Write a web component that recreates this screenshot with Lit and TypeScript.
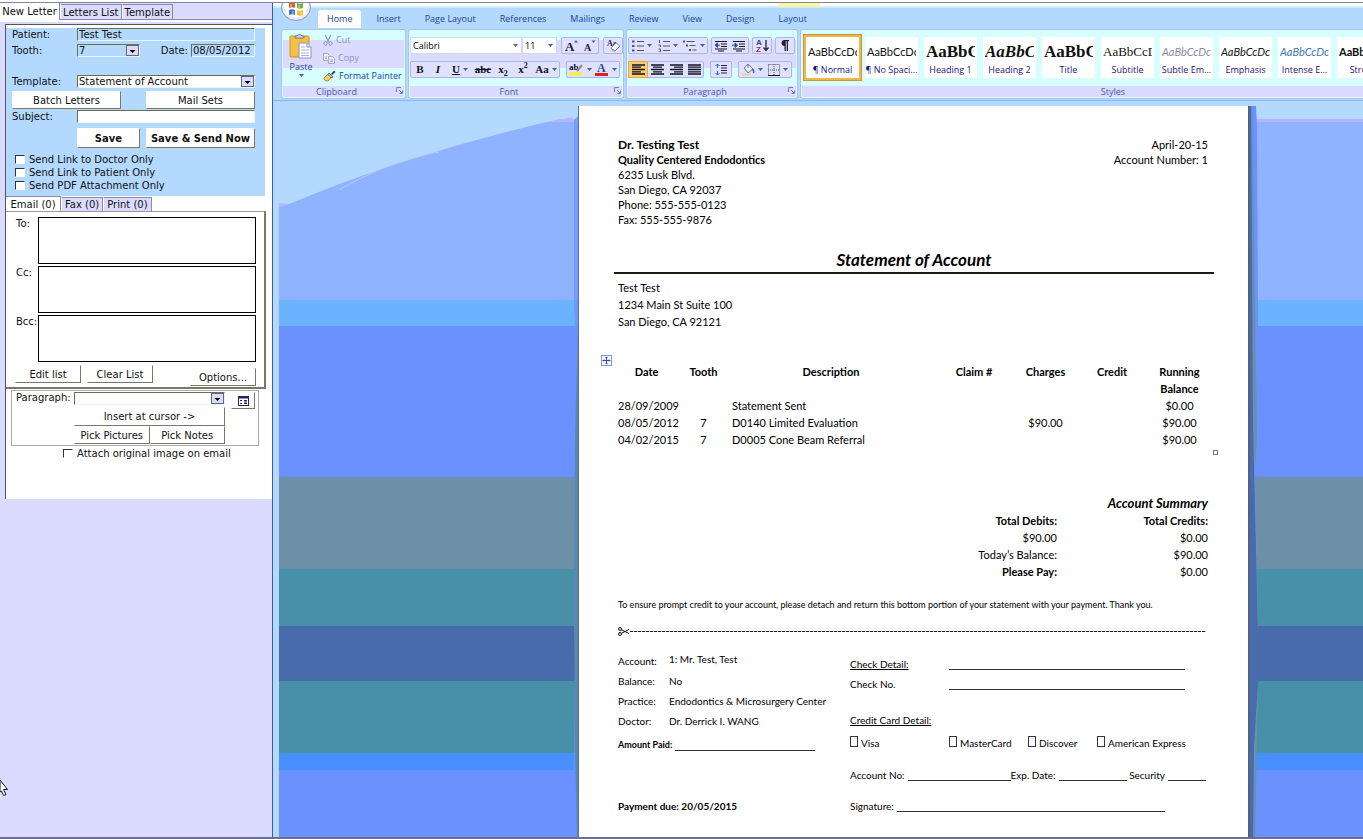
import { LitElement, html, css, svg, nothing } from "lit";
import { customElement } from "lit/decorators.js";
import { classMap } from "lit/directives/class-map.js";

const reset = css`
  *, *::before, *::after { box-sizing: border-box; }
  button, input, select, textarea { font: inherit; color: inherit; margin: 0; border-radius: 0; }
  button { cursor: pointer; padding: 0; }
`;

/* ---------- Letter form on the left ---------- */

@customElement("letter-panel")
class LetterPanel extends LitElement {
  static styles = [reset, css`
    :host { display: block; background: #dbdbff; font: 10px/14px "DejaVu Sans", Verdana, sans-serif; color: #111; }
    .tabs { display: flex; align-items: flex-end; height: 16px; }
    .tabs button { background: #dbdbff; border: 1px solid #8a8aa8; border-left-color: #fff; border-bottom: 0; height: 15px; line-height: 13px; padding: 0 2px; white-space: nowrap; }
    .tabs button.on { background: #fff; border: 0; height: 16px; line-height: 15px; width: 60px; padding: 0; border-right: 1px solid #8a8aa8; }
    .edge { height: 5px; border-top: 1px solid #8a8aa8; background: linear-gradient(#fff 0 2px, #dbdbff 2px); }
    .edge { border-image: linear-gradient(90deg, #fff 0 60px, #8a8aa8 60px) 1; }
    .sheet { margin-left: 5px; height: 475px; background: #fff; border-top: 1px solid #555; border-left: 1px solid #555; padding-top: 3px; }
    .blue { background: #b4d9ff; width: 259px; height: 168px; padding: 0 10px 0 6px; display: grid; grid-template-columns: 65px minmax(0, 1fr); grid-template-rows: 16px 31px 16px 19px 17px 22px; align-items: start; align-content: start; }
    .blue > label { line-height: 13px; }
    .field { height: 13px; width: 100%; border: 1px solid; border-color: #6d6d5a #e8f6ff #e8f6ff #6d6d5a; background: #fff; padding: 0 1px; line-height: 11px; display: block; outline: 0; }
    .tint { background: #b4d9ff; }
    .pick { position: relative; display: block; height: 13px; }
    .pick select { appearance: none; }
    .pick svg { position: absolute; right: 1px; top: 1px; width: 13px; height: 11px; pointer-events: none; }
    .split { display: flex; justify-content: space-between; }
    .date { display: flex; gap: 3px; line-height: 13px; }
    .wide { grid-column: 1 / -1; display: flex; justify-content: space-between; }
    .btn { background: #fff; border: 1px solid; border-color: #fff #77776a #77776a #fff; height: 18px; line-height: 15px; width: 109px; white-space: nowrap; }
    .w63 { width: 63px; }
    .w64 { width: 64px; }
    .half { width: 66px; }
    .save { font-weight: bold; height: 20px; line-height: 17px; }
    .saves { display: flex; justify-content: space-between; padding-top: 1px; }
    .checks { grid-column: 1 / -1; padding: 4px 0 0 3px; display: grid; row-gap: 0; }
    .check { display: flex; align-items: center; gap: 4px; line-height: 13px; height: 13px; }
    .check input { appearance: none; width: 10px; height: 9px; background: #fff; border: 1px solid; border-color: #333 #fff #fff #333; }
    .mail { width: 260px; height: 178px; border-top: 1px solid #9a9a9a; border-right: 2px solid #77776a; border-bottom: 2px solid #77776a; padding: 5px 8px 0 8px; }
    .tabs.sub { height: 15px; }
    .tabs.sub button { height: 14px; padding: 0 3px; }
    .tabs.sub button.on { width: 55px; height: 15px; padding: 0; border-top: 1px solid #8a8aa8; }
    .addr { display: grid; grid-template-columns: 24px 1fr; margin-bottom: 2px; line-height: 13px; }
    .addr label { padding-left: 2px; white-space: nowrap; }
    .addr textarea { height: 47px; width: 100%; resize: none; border: 1px solid #000; background: #fff; display: block; outline: 0; }
    .acts { display: flex; gap: 6px; padding: 1px 0 0 1px; }
    .acts .btn:last-child { margin: 3px 0 0 auto; }
    .para { width: 248px; height: 56px; margin: 1px 0 0 5px; border: 1px solid #aaa; display: grid; grid-template-columns: 58px 157px 24px; padding: 1px 2px 0 4px; align-content: start; }
    .para > label { line-height: 12px; }
    .stack { display: grid; grid-template-columns: 1fr 1fr; padding-right: 6px; }
    .stack .pick, .stack .long { grid-column: 1 / -1; }
    .stack .pick { height: 15px; }
    .stack .btn { width: auto; }
    .stack .long { height: 19px; }
    .icon { width: 24px; height: 17px; display: grid; place-items: center; }
    .attach { padding: 1px 0 0 57px; }
  `];

  arrow() {
    return html`<svg viewBox="0 0 13 11" aria-hidden="true"><rect x=".5" y=".5" width="12" height="10" fill="#dbdbff" stroke="#66667a"/><path d="M3.500 5h6L6.500 8z" fill="#000"/></svg>`;
  }
  check(id: string, text: string) {
    return html`<label class="check" for=${id}><input type="checkbox" id=${id}>${text}</label>`;
  }
  render() {
    return html`
      <nav class="tabs"><button class="on">New Letter</button><button>Letters List</button><button>Template</button></nav>
      <div class="edge"></div>
      <div class="sheet">
        <form class="blue" @submit=${(e: Event) => e.preventDefault()}>
          <label for="patient">Patient:</label><input class="field tint" id="patient" value="Test Test">
          <label for="tooth">Tooth:</label>
          <div class="split">
            <span class="pick w63"><select class="field tint" id="tooth"><option>7</option></select>${this.arrow()}</span>
            <span class="date"><label for="date">Date:</label><span class="w64"><input class="field tint" id="date" value="08/05/2012"></span></span>
          </div>
          <label for="template">Template:</label>
          <span class="pick"><select class="field" id="template"><option>Statement of Account</option></select>${this.arrow()}</span>
          <div class="wide"><button class="btn" type="button">Batch Letters</button><button class="btn" type="button">Mail Sets</button></div>
          <label for="subject">Subject:</label><input class="field" id="subject">
          <span></span>
          <div class="saves"><button class="btn save w63">Save</button><button class="btn save">Save &amp; Send Now</button></div>
          <div class="checks">
            ${this.check("doc", "Send Link to Doctor Only")}
            ${this.check("pat", "Send Link to Patient Only")}
            ${this.check("pdf", "Send PDF Attachment Only")}
          </div>
        </form>
        <nav class="tabs sub"><button class="on">Email (0)</button><button>Fax (0)</button><button>Print (0)</button></nav>
        <section class="mail">
          ${["To:", "Cc:", "Bcc:"].map(t => html`<div class="addr"><label for=${"a" + t}>${t}</label><textarea id=${"a" + t}></textarea></div>`)}
          <div class="acts"><button class="btn half">Edit list</button><button class="btn half">Clear List</button><button class="btn half">Options...</button></div>
        </section>
        <section class="para">
          <label for="paragraph">Paragraph:</label>
          <div class="stack">
            <span class="pick"><select class="field" id="paragraph"><option></option></select>${this.arrow()}</span>
            <button class="btn long">Insert at cursor -&gt;</button>
            <button class="btn">Pick Pictures</button><button class="btn">Pick Notes</button>
          </div>
          <button class="btn icon" aria-label="Paragraph list">
            <svg width="11" height="10" viewBox="0 0 11 10"><rect x=".5" y=".5" width="10" height="9" fill="#fff" stroke="#226"/><path d="M1 1.500h9" stroke="#226" stroke-width="2"/><path d="M2 4.500h2M2 7.500h2M6 4.500h3M6 6h3M6 7.500h3" stroke="#226"/></svg>
          </button>
        </section>
        <div class="attach">${this.check("attach", "Attach original image on email")}</div>
      </div>`;
  }
}

/* ---------- Ribbon ---------- */

const g = (w: number, h: number, body: unknown) =>
  html`<svg width=${w} height=${h} viewBox="0 0 ${w} ${h}" aria-hidden="true">${body}</svg>`;

const icons = {
  orb: g(32, 18, svg`<ellipse cx="16" cy="4" rx="14.500" ry="13.500" fill="#e9eef8" stroke="#8b9cc4"/><ellipse cx="16" cy="3" rx="12" ry="11" fill="#fff"/>
    <path d="M9 0c2-1 4-1 6 0v5c-2-1-4-1-6 0z" fill="#e0622a"/><path d="M17 0c2 1 4 1 6 0v5c-2 1-4 1-6 0z" fill="#7cae3c"/>
    <path d="M9 7c2-1 4-1 6 0v5c-2-1-4-1-6 0z" fill="#3f74c9"/><path d="M17 7c2 1 4 1 6 0v5c-2 1-4 1-6 0z" fill="#f2c232"/>
    <path d="M11 1v3M13 8v3M19 2v3M21 9v3" stroke="#fff" stroke-opacity=".6"/>`),
  paste: g(24, 26, svg`<rect x="1" y="3" width="19" height="21" rx="1" fill="#f5c043" stroke="#c9912b"/><path d="M6 5V3h2a3 3 0 0 1 5 0h2v2z" fill="#d8d8e4" stroke="#77778c"/>
    <path d="M10 10h8l4 4v11H10z" fill="#fff" stroke="#8794c4"/><path d="M18 10v4h4" fill="#dfe6fa" stroke="#8794c4"/><path d="M12 14h4M12 17h8M12 20h8M12 22.500h8" stroke="#a5b2dc"/>`),
  cut: g(10, 12, svg`<path d="M2 1l4 7M8 1L4 8" stroke="#8e9ab4" stroke-width="1.300"/><circle cx="2.500" cy="9.500" r="1.700" fill="none" stroke="#8e9ab4"/><circle cx="7.500" cy="9.500" r="1.700" fill="none" stroke="#8e9ab4"/>`),
  copy: g(12, 11, svg`<path d="M.5.5h4l2 2v5h-6z" fill="#eef" stroke="#a4a8c8"/><path d="M5.500 3.500h4l2 2v5h-6z" fill="#eef" stroke="#a4a8c8"/><path d="M7 7h3M7 8.500h3M2 4h2M2 5.500h2" stroke="#a4a8c8"/>`),
  brush: g(13, 12, svg`<path d="M8 4l3-3.500 1.500 1.500L9.500 5z" fill="#1f4a8a"/><path d="M6 3l4 4-2 1-3-3z" fill="#ccd" stroke="#556"/><path d="M5 4L1 8c0 2 1 3 4 3l3-3z" fill="#f4cf6a" stroke="#a9873a"/>`),
  launch: g(7, 7, svg`<path d="M.5 5V.5H5" fill="none" stroke="#7080b8"/><path d="M3 3l3 3M6.500 3.500v3h-3" fill="none" stroke="#7080b8"/>`),
  down: g(5, 3, svg`<path d="M0 0h5L2.500 3z" fill="#4a5f9e"/>`),
  grow: g(13, 13, svg`<text x="0" y="12" font-size="13" font-weight="bold" font-family="Liberation Serif" fill="#223">A</text><path d="M9 3.500h4L11 1z" fill="#2f64c8"/>`),
  shrink: g(13, 13, svg`<text x="1" y="12" font-size="10" font-weight="bold" font-family="Liberation Serif" fill="#223">A</text><path d="M8.500 1.500h4L10.500 4z" fill="#2f64c8"/>`),
  eraser: g(15, 13, svg`<text x="1" y="7" font-size="8" font-weight="bold" font-family="Liberation Serif" fill="#223">Aa</text><path d="M5 9l5-5 4 3-5 5H7z" fill="#fff" stroke="#8a8ab4"/><path d="M5 9l4 3" stroke="#8a8ab4"/>`),
  bullets: g(12, 12, svg`<path d="M0 1.500h2.500M0 6h2.500M0 10.500h2.500" stroke="#3a55a8" stroke-width="2"/><path d="M5 1.500h7M5 6h7M5 10.500h7" stroke="#556"/>`),
  numbers: g(12, 12, svg`<path d="M1.500 0v3M.5 5h2v2M.5 9h2v3h-2" fill="none" stroke="#3a55a8"/><path d="M5 1.500h7M5 6h7M5 10.500h7" stroke="#556"/>`),
  levels: g(14, 12, svg`<path d="M0 1.500h2M3 5.500h2M6 10h2" stroke="#3a55a8" stroke-width="2"/><path d="M3.500 1.500h8M6.500 5.500h6M9.500 10h4" stroke="#556"/>`),
  outdent: g(14, 12, svg`<path d="M1 1.500h12M7 4h6M7 6.500h6M1 9h12M4 11h6" stroke="#112" stroke-width="1.200"/><path d="M6 5.200L2 5.200M3.500 3L1 5.200l2.500 2.300z" fill="#2849a0" stroke="#2849a0"/>`),
  indent: g(14, 12, svg`<path d="M1 1.500h12M7 4h6M7 6.500h6M1 9h12M4 11h6" stroke="#112" stroke-width="1.200"/><path d="M0 5.200h4M3 3l2.500 2.200L3 7.500z" fill="#2849a0" stroke="#2849a0"/>`),
  sort: g(13, 13, svg`<text x="0" y="6" font-size="8" font-weight="bold" font-family="Liberation Sans" fill="#2849a0">A</text><text x="0" y="13" font-size="8" font-weight="bold" font-family="Liberation Sans" fill="#a02c3c">Z</text><path d="M10 1v10M7.500 8.500l2.500 3 2.500-3" fill="none" stroke="#223" stroke-width="1.300"/>`),
  pilcrow: g(10, 11, svg`<path d="M4.500 0H9v1.300H8V11H6.700V1.300H5.800V11H4.500V6A3 3 0 0 1 4.500 0z" fill="#223"/>`),
  left: g(13, 11, svg`<path d="M0 1h13M0 3.200h9M0 5.500h13M0 7.800h9M0 10h13" stroke="#112" stroke-width="1.300"/>`),
  center: g(13, 11, svg`<path d="M0 1h13M2 3.200h9M0 5.500h13M2 7.800h9M0 10h13" stroke="#112" stroke-width="1.300"/>`),
  right: g(13, 11, svg`<path d="M0 1h13M4 3.200h9M0 5.500h13M4 7.800h9M0 10h13" stroke="#112" stroke-width="1.300"/>`),
  justify: g(13, 11, svg`<path d="M0 1h13M0 3.200h13M0 5.500h13M0 7.800h13M0 10h13" stroke="#112" stroke-width="1.300"/>`),
  spacing: g(12, 13, svg`<path d="M2.500 1v4M2.500 8v4M.5 3l2-2 2 2M.5 10l2 2 2-2" fill="none" stroke="#2f64c8"/><path d="M6 2.500h6M6 5h6M6 7.500h6M6 10h6" stroke="#223"/>`),
  bucket: g(14, 13, svg`<path d="M3 5l4-4 5 5-5 4z" fill="#e8edfa" stroke="#6a76a8"/><path d="M7 1v4" stroke="#6a76a8"/><path d="M11 6c2 1 2 3 1.500 4" fill="none" stroke="#2f64c8" stroke-width="1.500"/><path d="M1 11.500h9" stroke="#e8d98a" stroke-width="2"/>`),
  borders: g(12, 12, svg`<path d="M.5.5h11v11M.5.5v11M6 0v12M0 6h12" fill="none" stroke="#556" stroke-dasharray="1 1"/><path d="M0 11.500h12" stroke="#112"/>`),
  high: g(15, 13, svg`<text x="0" y="7" font-size="9" font-weight="bold" font-family="Liberation Serif" fill="#112">ab</text><path d="M8 8l5-6" stroke="#889" stroke-width="2"/><path d="M0 11h13" stroke="#ffee22" stroke-width="3"/>`),
  color: g(14, 13, svg`<text x="2" y="9" font-size="12" font-weight="bold" font-family="Liberation Serif" fill="#2a4a9c">A</text><path d="M0 11.500h13" stroke="#e0201c" stroke-width="3"/>`),
};

type Tool = { label: string; icon?: unknown; text?: unknown; cls?: string; menu?: boolean };

@customElement("word-ribbon")
class WordRibbon extends LitElement {
  static styles = [reset, css`
    :host { display: block; background: #b4d9ff; font: 9px/14px "Open Sans", "Noto Sans", sans-serif; color: #1d3f94; overflow: hidden; }
    .title { height: 5px; background: linear-gradient(#fff 0 3px, #c8efff 3px 5px); padding-left: 505px; }
    .context { width: 42px; height: 4px; background: #fcf6a4; }
    .menu { display: flex; align-items: flex-end; gap: 6px; height: 20px; padding-left: 7px; }
    .orb { width: 32px; height: 18px; align-self: flex-start; margin-top: -5px; border: 0; background: none; }
    .orb svg { display: block; }
    .tab { border: 0; background: none; padding: 0 9px; height: 18px; line-height: 16px; white-space: nowrap; }
    .tab.on { background: #fff; border-radius: 3px 3px 0 0; }
    .groups { display: flex; gap: 2px; height: 73px; padding: 1px 0 1px 8px; border-bottom: 1px solid #8fb4f0; }
    .group { display: flex; flex-direction: column; border: 1px solid #a4c4f4; border-radius: 3px; background: linear-gradient(#d8ffff 0 10px, #dbdbff 10px 38px, #d8ffff 38px 56px, #dbdbff 56px); box-shadow: inset 0 0 0 1px #e8fbff; flex: none; }
    .group .body { flex: 1; }
    .cap { display: grid; grid-template-columns: 12px 1fr 12px; height: 13px; line-height: 14px; text-align: center; color: #3c5cb0; }
    .cap button { grid-column: 3; border: 0; background: none; line-height: 0; height: 11px; }
    .cap span { grid-column: 2; padding-right: 14px; }
    .clip { width: 125px; }
    .font { width: 216px; }
    .parg { width: 172px; }
    .styles { flex: 1 0 640px; background: linear-gradient(#d8ffff 0 56px, #dbdbff 56px); margin-right: -77px; }
    .clip .body { display: grid; grid-template-columns: 38px 1fr; }
    .paste { border: 0; background: none; color: inherit; display: flex; flex-direction: column; align-items: center; padding-top: 3px; }
    .paste .lbl { line-height: 15px; }
    .cmds { display: grid; grid-template-rows: repeat(3, 18px); padding-top: 1px; }
    .cmd { border: 0; background: none; display: flex; align-items: center; gap: 3px; padding-left: 3px; white-space: nowrap; }
    .cmd.off { color: #8e94b8; }
    .cmd svg { flex: none; }
    .rows { display: grid; grid-template-rows: 17px 17px; row-gap: 7px; padding: 7px 1px 0; align-content: start; }
    .row { display: flex; gap: 4px; }
    .tight { gap: 3px; }
    .spread { gap: 6px; }
    .combo { position: relative; display: block; }
    .combo select { appearance: none; height: 17px; width: 100%; border: 1px solid #c8dcff; background: #fff; color: #000; padding: 0 2px; display: block; outline: 0; }
    .combo svg { position: absolute; right: 4px; top: 7px; pointer-events: none; }
    .face { width: 112px; }
    .pt { width: 35px; margin-left: -4px; }
    .cluster { display: flex; border: 1px solid #a8b8ee; border-radius: 2px; background: #e0e0ff; height: 17px; }
    .tool { border: 0; background: none; color: #111; display: flex; align-items: center; justify-content: center; gap: 3px; width: 18px; font: bold 11px/13px "Liberation Serif", serif; white-space: nowrap; }
    .tool.menu { width: 26px; height: auto; padding: 0; }
    .tool.roomy { width: 20px; }
    .tool.on { background: #ffce6b; box-shadow: 0 0 0 1px #e0a850; }
    .it { font-style: italic; }
    .un { text-decoration: underline; }
    .st { text-decoration: line-through; }
    .sm { font-size: 8px; line-height: 0; }
    .gallery { display: flex; gap: 6px; padding: 7px 0 0 5px; }
    .style { width: 53px; height: 41px; border: 0; background: #fff; display: flex; flex-direction: column; align-items: center; overflow: hidden; flex: none; padding: 0; color: #1c1480; }
    .style.on { box-shadow: 0 0 0 2px #f0b848, 0 0 0 3px #c89440; }
    .prev { width: 49px; height: 25px; line-height: 29px; overflow: hidden; white-space: nowrap; color: #111; font-family: Lato, sans-serif; font-size: 11px; text-align: left; }
    .prev.serif { font: bold 17px/29px "Liberation Serif", serif; }
    .prev.sub { font: 13px/29px "Liberation Serif", serif; }
    .prev.i { font-style: italic; }
    .prev.grey { color: #8c8ca0; }
    .prev.blue { color: #3c78b4; }
    .prev.b { font-weight: bold; }
    .nm { line-height: 16px; white-space: nowrap; }
  `];

  tool(t: Tool) {
    return html`<button class="tool ${t.cls ?? ""} ${t.menu ? "menu" : ""}" aria-label=${t.label}>${t.icon ?? html`<span>${t.text}</span>`}${t.menu ? icons.down : nothing}</button>`;
  }
  cluster(...tools: Tool[]) {
    return html`<div class="cluster">${tools.map(t => this.tool(t))}</div>`;
  }
  cap(name: string, launch = true) {
    return html`<div class="cap"><span>${name}</span>${launch ? html`<button aria-label="${name} options">${icons.launch}</button>` : nothing}</div>`;
  }
  render() {
    const tabs = ["Home", "Insert", "Page Layout", "References", "Mailings", "Review", "View", "Design", "Layout"];
    const styles: [string, string, string][] = [
      ["AaBbCcDc", "¶ Normal", ""], ["AaBbCcDc", "¶ No Spaci...", ""], ["AaBbC", "Heading 1", "serif"], ["AaBbCc", "Heading 2", "serif i"],
      ["AaBbC", "Title", "serif"], ["AaBbCcD", "Subtitle", "sub"], ["AaBbCcDc", "Subtle Em...", "i grey"], ["AaBbCcDc", "Emphasis", "i"],
      ["AaBbCcDc", "Intense E...", "i blue"], ["AaBbCcDc", "Strong", "b"],
    ];
    return html`
      <div class="title"><div class="context"></div></div>
      <nav class="menu">
        <button class="orb" aria-label="Office menu">${icons.orb}</button>
        ${tabs.map((t, i) => html`<button class=${classMap({ tab: true, on: i === 0 })}>${t}</button>`)}
      </nav>
      <div class="groups">
        <section class="group clip">
          <div class="body">
            <button class="paste">${icons.paste}<span class="lbl">Paste</span>${icons.down}</button>
            <div class="cmds"><button class="cmd off">${icons.cut}Cut</button><button class="cmd off">${icons.copy}Copy</button><button class="cmd">${icons.brush}Format Painter</button></div>
          </div>
          ${this.cap("Clipboard")}
        </section>
        <section class="group font">
          <div class="body rows">
            <div class="row">
              <span class="combo face"><select aria-label="Font"><option>Calibri</option></select>${icons.down}</span>
              <span class="combo pt"><select aria-label="Font size"><option>11</option></select>${icons.down}</span>
              ${this.cluster({ label: "Grow font", icon: icons.grow }, { label: "Shrink font", icon: icons.shrink })}
              ${this.cluster({ label: "Clear formatting", icon: icons.eraser })}
            </div>
            <div class="row spread">
              ${this.cluster({ label: "Bold", text: "B" }, { label: "Italic", text: "I", cls: "it" }, { label: "Underline", text: html`<span class="un">U</span>`, menu: true },
                { label: "Strikethrough", text: html`<span class="st">abc</span>`, cls: "roomy" }, { label: "Subscript", text: html`x<sub class="sm">2</sub>`, cls: "roomy" },
                { label: "Superscript", text: html`x<sup class="sm">2</sup>`, cls: "roomy" }, { label: "Change case", text: "Aa", menu: true })}
              ${this.cluster({ label: "Highlight", icon: icons.high, menu: true }, { label: "Font colour", icon: icons.color, menu: true })}
            </div>
          </div>
          ${this.cap("Font")}
        </section>
        <section class="group parg">
          <div class="body rows">
            <div class="row tight">
              ${this.cluster({ label: "Bullets", icon: icons.bullets, menu: true }, { label: "Numbering", icon: icons.numbers, menu: true }, { label: "Multilevel list", icon: icons.levels, menu: true })}
              ${this.cluster({ label: "Decrease indent", icon: icons.outdent }, { label: "Increase indent", icon: icons.indent })}
              ${this.cluster({ label: "Sort", icon: icons.sort })}
              ${this.cluster({ label: "Show marks", icon: icons.pilcrow })}
            </div>
            <div class="row spread">
              ${this.cluster({ label: "Left", icon: icons.left, cls: "on" }, { label: "Center", icon: icons.center, cls: "roomy" }, { label: "Right", icon: icons.right }, { label: "Justify", icon: icons.justify })}
              ${this.cluster({ label: "Line spacing", icon: icons.spacing, cls: "roomy" })}
              ${this.cluster({ label: "Shading", icon: icons.bucket, menu: true }, { label: "Borders", icon: icons.borders, menu: true })}
            </div>
          </div>
          ${this.cap("Paragraph")}
        </section>
        <section class="group styles">
          <div class="body gallery">
            ${styles.map(([p, n, c], i) => html`<button class=${classMap({ style: true, on: i === 0 })}><span class="prev ${c}">${p}</span><span class="nm">${n}</span></button>`)}
          </div>
          ${this.cap("Styles", false)}
        </section>
      </div>`;
  }
}

/* ---------- Statement document ---------- */

@customElement("statement-page")
class StatementPage extends LitElement {
  static styles = [reset, css`
    :host { display: flex; background: linear-gradient(#b4d9ff 0 18px, #b4b4ff 18px 21px, #90b3ff 21px 199px, #6bb3ff 199px 225px, #6b90ff 225px 376px, #6b90a8 376px 468px, #4890a8 468px 525px, #486bab 525px 580px, #4890a8 580px 652px, #4890ff 652px 669px, #6b90ff 669px); font: 11px/17px Lato, Carlito, sans-serif; color: #000; }
    .gutter { width: 293px; flex: none; }
    .gutter svg, .shade { display: block; }
    .shade { flex: none; height: auto; margin-top: 5px; }
    .page { position: relative; width: 670px; flex: none; background: #fff; margin-top: 5px; padding: 31px 40px 20px 39px; border-left: 1px solid #62707c; }
    .head { display: flex; justify-content: space-between; line-height: 15px; }
    .lead { font-size: 12px; }
    .end { text-align: right; }
    h1 { font: italic bold 17px/24px Lato, Carlito, sans-serif; text-align: center; margin: 21px -6px 5px -4px; border-bottom: 2px solid #1c1c10; }
    table { width: 100%; border-collapse: collapse; table-layout: fixed; margin-top: 33px; text-align: center; }
    th, td { padding: 0; vertical-align: top; height: 17px; }
    .c1 { width: 57px; } .c2 { width: 57px; } .c3 { width: 198px; } .c4 { width: 88px; } .c5 { width: 55px; } .c6 { width: 78px; }
    .l { text-align: left; white-space: nowrap; }
    .handle { position: absolute; left: 22px; top: 249px; }
    .grip { position: absolute; right: 30px; top: 344px; width: 5px; height: 5px; border: 1px solid #777; }
    .sum { margin-top: 47px; }
    .sum th, .sum td { text-align: right; font-weight: normal; }
    .sum .s1 { width: 439px; }
    .sum .b { font-weight: bold; }
    .sum .bi { font-weight: bold; font-style: italic; font-size: 13px; line-height: 17px; }
    .note { margin: 18px 0 13px; font-size: 9px; line-height: 14px; white-space: nowrap; }
    .cutline { display: flex; align-items: center; height: 12px; }
    .cutline i { flex: 1; height: 1px; background: repeating-linear-gradient(90deg, #222 0 3px, #ccc 3px 4px); margin-right: 2px; }
    .slip { display: grid; grid-template-columns: 232px 1fr; margin-top: 14px; font-size: 10px; line-height: 20px; white-space: nowrap; }
    dl { display: grid; grid-template-columns: 51px 1fr; margin: 0; }
    dd { margin: 0; }
    .up { line-height: 16px; }
    .line { display: flex; align-items: flex-start; height: 20px; }
    .blank { border: 0; border-bottom: 1px solid #333; background: none; height: 16px; padding: 0; min-width: 0; outline: 0; margin-left: 3px; }
    .w140 { width: 140px; } .w236 { width: 236px; } .w103 { width: 103px; } .w68 { width: 68px; } .w38 { width: 38px; } .w268 { width: 268px; }
    .paid { margin-top: 4px; font-weight: bold; font-size: 9px; }
    .due { margin-top: 41px; font-weight: bold; }
    .right { padding-top: 3px; }
    .key { width: 96px; }
    .u { text-decoration: underline; }
    .card { margin-top: 16px; }
    .opts { margin-top: 3px; display: grid; grid-template-columns: 99px 79px 69px 1fr; }
    .opts label { display: flex; gap: 3px; }
    .opts input { appearance: none; width: 8px; height: 11px; border: 1px solid #335; margin-top: 3px; }
    .acct { margin-top: 12px; }
    .sig { margin-top: 11px; }
  `];

  blank(label: string, cls: string) {
    return html`<input class="blank ${cls}" aria-label=${label}>`;
  }
  render() {
    const rows = [
      ["28/09/2009", "", "Statement Sent", "", "", "", "$0.00"],
      ["08/05/2012", "7", "D0140 Limited Evaluation", "", "$90.00", "", "$90.00"],
      ["04/02/2015", "7", "D0005 Cone Beam Referral", "", "", "", "$90.00"],
    ];
    return html`
      <div class="gutter">
        <svg width="293" height="110" viewBox="0 0 293 110"><path d="M0 0H293V15C200 36 100 65 10 103L0 105z" fill="#b4d9ff"/><path d="M250 26L293 16V21H270zM0 102L10 103 0 106z" fill="#b4b4ff"/><path d="M60 89C100 66 130 57 160 51" fill="none" stroke="#b8c8ff"/></svg>
      </div>
      <svg class="shade" width="6" viewBox="0 0 6 731" preserveAspectRatio="none"><path d="M2 14L6 10V731H4L2 650 5 400 3 220 2 200z" fill="#6b90ff" fill-opacity=".7"/><path d="M6 230V731H5L3 640 2 510 3 330 5 260z" fill="#5a88b0"/></svg>
      <main class="page">
        <div class="head">
          <div><b class="lead">Dr. Testing Test</b><br><b>Quality Centered Endodontics</b><br>6235 Lusk Blvd.<br>San Diego, CA 92037<br>Phone: 555-555-0123<br>Fax: 555-555-9876</div>
          <div class="end">April-20-15<br>Account Number: 1</div>
        </div>
        <h1>Statement of Account</h1>
        <div>Test Test<br>1234 Main St Suite 100<br>San Diego, CA 92121</div>
        <svg class="handle" width="11" height="11" viewBox="0 0 11 11"><rect x=".5" y=".5" width="10" height="10" fill="#fff" stroke="#7c94d8"/><path d="M5.500 2v7M2 5.500h7M4.500 3l1-1 1 1M4.500 8l1 1 1-1M3 4.500l-1 1 1 1M8 4.500l1 1-1 1" fill="none" stroke="#2a4cb0"/></svg>
        <table>
          <colgroup><col class="c1"><col class="c2"><col class="c3"><col class="c4"><col class="c5"><col class="c6"><col></colgroup>
          <thead><tr><th>Date</th><th>Tooth</th><th>Description</th><th>Claim #</th><th>Charges</th><th>Credit</th><th>Running Balance</th></tr></thead>
          <tbody>${rows.map(r => html`<tr>${r.map((c, i) => html`<td class=${i === 2 ? "l" : ""}>${c}</td>`)}</tr>`)}</tbody>
        </table>
        <span class="grip"></span>
        <table class="sum">
          <colgroup><col class="s1"><col></colgroup>
          <tbody>
            <tr><td></td><th class="bi">Account Summary</th></tr>
            <tr><th class="b">Total Debits:</th><th class="b">Total Credits:</th></tr>
            <tr><td>$90.00</td><td>$0.00</td></tr>
            <tr><th>Today’s Balance:</th><td>$90.00</td></tr>
            <tr><th class="b">Please Pay:</th><td>$0.00</td></tr>
          </tbody>
        </table>
        <p class="note">To ensure prompt credit to your account, please detach and return this bottom portion of your statement with your payment. Thank you.</p>
        <div class="cutline"><svg width="12" height="9" viewBox="0 0 12 9"><path d="M3 2.500l8 4M3 6.500l8-4" stroke="#111"/><circle cx="2" cy="2" r="1.500" fill="none" stroke="#111"/><circle cx="2" cy="7" r="1.500" fill="none" stroke="#111"/></svg><i></i></div>
        <div class="slip">
          <div>
            <dl><dt>Account:</dt><dd class="up">1: Mr. Test, Test</dd><dt>Balance:</dt><dd>No</dd><dt>Practice:</dt><dd>Endodontics &amp; Microsurgery Center</dd><dt>Doctor:</dt><dd>Dr. Derrick I. WANG</dd></dl>
            <div class="line paid">Amount Paid: ${this.blank("Amount Paid", "w140")}</div>
            <div class="due">Payment due: 20/05/2015</div>
          </div>
          <div class="right">
            <div class="line"><span class="key u">Check Detail:</span>${this.blank("Check Detail", "w236")}</div>
            <div class="line"><span class="key">Check No.</span>${this.blank("Check No.", "w236")}</div>
            <div class="card u">Credit Card Detail:</div>
            <div class="opts">${["Visa", "MasterCard", "Discover", "American Express"].map(c => html`<label><input type="checkbox">${c}</label>`)}</div>
            <div class="line acct">Account No: ${this.blank("Account No", "w103")}Exp. Date: ${this.blank("Exp. Date", "w68")}&nbsp;Security ${this.blank("Security", "w38")}</div>
            <div class="line sig">Signature: ${this.blank("Signature", "w268")}</div>
          </div>
        </div>
      </main>
      <svg class="shade" width="10" viewBox="0 0 10 731" preserveAspectRatio="none"><path d="M0 0H8L9 20 10 220 7 375 10 520V576L7 640V731H0z" fill="#6b90ff"/><path d="M0 0H4L9 330 6 375 10 520V576L7 731H0z" fill="#6b90a8"/><path d="M0 0H3L5 320 7 400 10 530V576L6 640 5 731H0z" fill="#486bab"/><path d="M0 0H1.500V731H0z" fill="#52607c"/></svg>`;
  }
}

@customElement("app-root")
class AppRoot extends LitElement {
  static styles = [reset, css`
    :host { display: flex; flex-direction: column; min-height: 100vh; background: #dbdbff; overflow: hidden; position: relative; }
    .top { height: 3px; background: #fff; border-bottom: 1px solid #85859a; }
    .cols { flex: 1; display: grid; grid-template-columns: 272px minmax(0, 1fr); }
    .word { border-left: 1px solid #3c5ca8; display: flex; flex-direction: column; min-width: 0; overflow: hidden; background: #b4d9ff; }
    .doc { flex: 1; margin-left: 6px; }
    .foot { height: 2px; background: #6b6f90; }
    .cursor { position: absolute; left: 0; top: 779px; }
  `];
  render() {
    return html`
      <div class="top"></div>
      <div class="cols">
        <letter-panel></letter-panel>
        <div class="word"><word-ribbon></word-ribbon><statement-page class="doc"></statement-page></div>
      </div>
      <div class="foot"></div>
      <svg class="cursor" width="9" height="18" viewBox="0 0 9 18" aria-hidden="true"><path d="M0 1L7.500 10.500H3.500L6 15.500 3.500 16.500 1.500 12 0 13z" fill="#fff" stroke="#112"/></svg>`;
  }
}
